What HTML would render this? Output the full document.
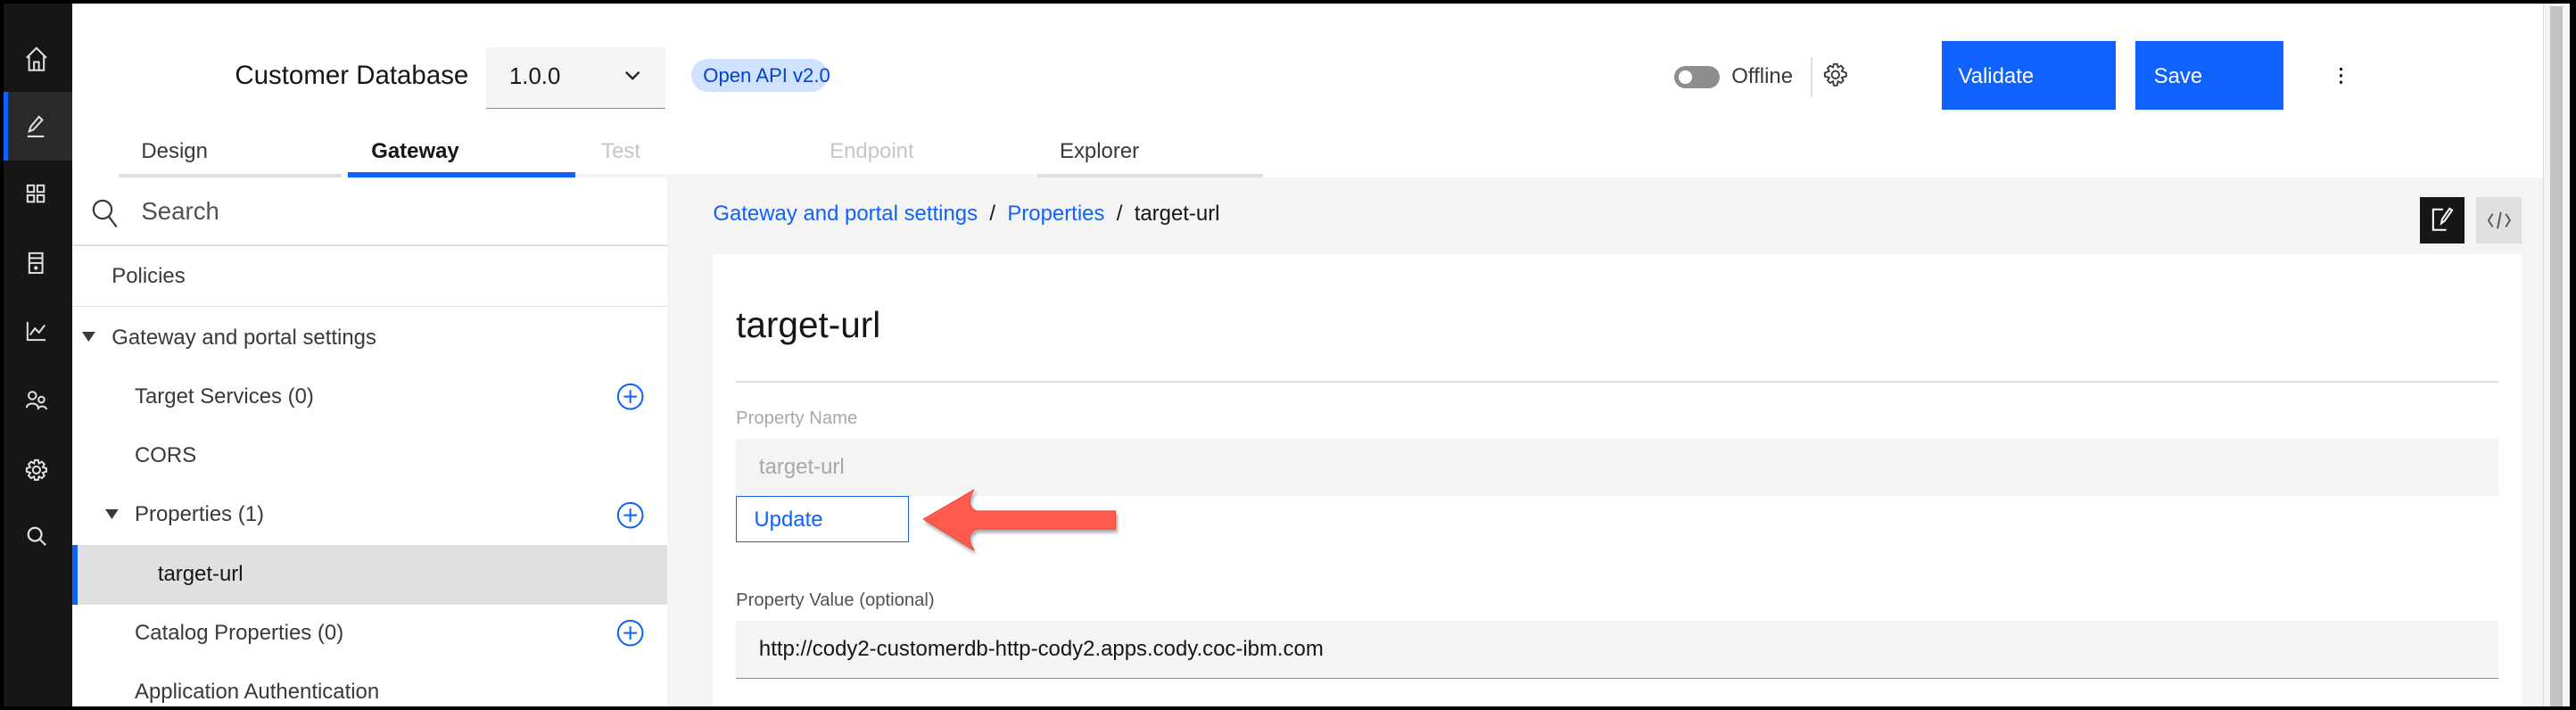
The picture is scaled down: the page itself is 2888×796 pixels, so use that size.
<!DOCTYPE html>
<html><head><meta charset="utf-8"><style>
*{box-sizing:border-box;margin:0;padding:0}
html,body{width:2888px;height:796px;overflow:hidden;background:#000}
#root{zoom:1.841837;position:relative;width:1568px;height:432px;background:#000;font-family:"Liberation Sans",sans-serif;color:#161616}
.a{position:absolute}
.t{position:absolute;white-space:nowrap;line-height:1}
svg{position:absolute;overflow:visible}
</style></head><body><div id="root">
<!-- main white area -->
<div class="a" style="left:44px;top:2px;width:1520px;height:428px;background:#fff"></div>
<!-- sidebar -->
<div class="a" style="left:2px;top:2px;width:42px;height:428px;background:#161616"></div>
<div class="a" style="left:2px;top:56px;width:42px;height:42px;background:#2a2a2a"></div>
<div class="a" style="left:2px;top:56px;width:3px;height:42px;background:#0f62fe"></div>
<svg style="left:15px;top:28px" width="14" height="16" fill="none" stroke="#e0e0e0" stroke-width="1.1"><path d="M1 7 L7 1 L13 7 M2.5 6 V14.5 H11.5 V6 M5.5 14.5 V9.5 H8.5 V14.5"/></svg>
<svg style="left:16px;top:70px" width="12" height="14" fill="none" stroke="#e0e0e0" stroke-width="1.1"><path d="M2 10 L3 7 L8 1 L10 3 L4.5 9 Z M1 13 H11"/></svg>
<svg style="left:16px;top:112px" width="12" height="12" fill="none" stroke="#e0e0e0" stroke-width="1.1"><rect x="1" y="1" width="4" height="4"/><rect x="7" y="1" width="4" height="4"/><rect x="1" y="7" width="4" height="4"/><rect x="7" y="7" width="4" height="4"/></svg>
<svg style="left:17px;top:153px" width="10" height="14" fill="none" stroke="#e0e0e0" stroke-width="1.1"><rect x="1" y="1" width="8" height="12"/><path d="M1 4 H9 M1 7 H9"/><circle cx="5" cy="10" r=".6" fill="#e0e0e0"/></svg>
<svg style="left:16px;top:195px" width="13" height="13" fill="none" stroke="#e0e0e0" stroke-width="1.1"><path d="M1 1 V12 H12 M2.5 9 L5.5 5 L8 7.5 L11.5 3"/></svg>
<svg style="left:15px;top:237px" width="14" height="13" fill="none" stroke="#e0e0e0" stroke-width="1.1"><circle cx="4.5" cy="3.5" r="2.3"/><path d="M1 11 C1 7.5 8 7.5 8 11"/><circle cx="10" cy="6" r="1.8"/><path d="M8 12 C8 9.5 13 9.5 13 12"/></svg>
<svg style="left:15px;top:279px" width="14" height="14" fill="none" stroke="#e0e0e0" stroke-width="1.1"><circle cx="7" cy="7" r="2.2"/><path d="M6 1 H8 L8.5 3 L10.3 2 L11.8 3.5 L10.8 5.3 L13 6 V8 L10.8 8.7 L11.8 10.5 L10.3 12 L8.5 11 L8 13 H6 L5.5 11 L3.7 12 L2.2 10.5 L3.2 8.7 L1 8 V6 L3.2 5.3 L2.2 3.5 L3.7 2 L5.5 3 Z"/></svg>
<svg style="left:16px;top:320px" width="13" height="13" fill="none" stroke="#e0e0e0" stroke-width="1.2"><circle cx="5.5" cy="5.5" r="4"/><path d="M8.5 8.5 L12 12"/></svg>
<!-- scrollbar -->
<div class="a" style="left:1548px;top:2px;width:16px;height:428px;background:#f4f4f4;border-left:1px solid #ddd"></div>
<div class="a" style="left:1552px;top:4px;width:8px;height:426px;background:#c1c1c1"></div>
<!-- header -->
<div class="t" style="left:143px;top:38px;font-size:16px">Customer Database</div>
<div class="a" style="left:296px;top:29px;width:109px;height:37px;background:#f4f4f4;border-bottom:1px solid #8d8d8d"></div>
<div class="t" style="left:310px;top:40px;font-size:14px">1.0.0</div>
<svg style="left:380px;top:43px" width="10" height="6" fill="none" stroke="#161616" stroke-width="1.2"><path d="M1 1 L5 5 L9 1"/></svg>
<div class="a" style="left:421px;top:36px;width:83px;height:20px;background:#d0e2ff;border-radius:10px"></div>
<div class="t" style="left:428px;top:40px;font-size:12px;color:#0043ce">Open API v2.0</div>
<div class="a" style="left:1019px;top:40px;width:28px;height:14px;background:#8d8d8d;border-radius:7px"></div>
<div class="a" style="left:1022px;top:43px;width:8px;height:8px;background:#fff;border-radius:4px"></div>
<div class="t" style="left:1054px;top:40px;font-size:13px;color:#393939">Offline</div>
<div class="a" style="left:1102px;top:35px;width:1px;height:24px;background:#e0e0e0"></div>
<svg style="left:1110px;top:38px" width="15" height="15" fill="none" stroke="#393939" stroke-width="1"><circle cx="7.5" cy="7.5" r="2.3"/><path d="M6.5 1 H8.5 L9 3 L10.8 2 L12.3 3.5 L11.3 5.3 L14 6.3 V8.5 L11.3 9.2 L12.3 11 L10.8 12.5 L9 11.5 L8.5 14 H6.5 L6 11.5 L4.2 12.5 L2.7 11 L3.7 9.2 L1 8.5 V6.3 L3.7 5.3 L2.7 3.5 L4.2 2 L6 3 Z"/></svg>
<div class="a" style="left:1182px;top:25px;width:106px;height:42px;background:#0f62fe"></div>
<div class="t" style="left:1192px;top:40px;font-size:13px;color:#fff">Validate</div>
<div class="a" style="left:1300px;top:25px;width:90px;height:42px;background:#0f62fe"></div>
<div class="t" style="left:1311px;top:40px;font-size:13px;color:#fff">Save</div>
<div class="a" style="left:1424px;top:41px;width:2px;height:2px;background:#161616;box-shadow:0 4px 0 #161616,0 8px 0 #161616"></div>
<!-- tabs -->
<div class="t" style="left:86px;top:86px;font-size:13px;color:#393939">Design</div>
<div class="t" style="left:226px;top:86px;font-size:13px;font-weight:bold">Gateway</div>
<div class="t" style="left:366px;top:86px;font-size:13px;color:#c6c6c6">Test</div>
<div class="t" style="left:505px;top:86px;font-size:13px;color:#c6c6c6">Endpoint</div>
<div class="t" style="left:645px;top:86px;font-size:13px;color:#393939">Explorer</div>
<div class="a" style="left:72px;top:106px;width:136px;height:2px;background:#e0e0e0"></div>
<div class="a" style="left:212px;top:105px;width:138px;height:3px;background:#0f62fe"></div>
<div class="a" style="left:350px;top:106px;width:280px;height:2px;background:#f4f4f4"></div>
<div class="a" style="left:631px;top:106px;width:138px;height:2px;background:#e0e0e0"></div>
<!-- left panel -->
<svg style="left:56px;top:121px" width="16" height="18" fill="none" stroke="#393939" stroke-width="1.2"><circle cx="6.5" cy="6.5" r="5.5"/><path d="M10.5 11 L15 17"/></svg>
<div class="t" style="left:86px;top:121px;font-size:15px;color:#525252">Search</div>
<div class="a" style="left:44px;top:149px;width:362px;height:1px;background:#e0e0e0"></div>
<div class="t" style="left:68px;top:162px;font-size:13px;color:#393939">Policies</div>
<div class="a" style="left:44px;top:186px;width:362px;height:1px;background:#e0e0e0"></div>
<svg style="left:50px;top:202px" width="8" height="6"><path d="M0 0 H8 L4 6 Z" fill="#393939"/></svg>
<div class="t" style="left:68px;top:199px;font-size:13px;color:#393939">Gateway and portal settings</div>
<div class="t" style="left:82px;top:235px;font-size:13px;color:#393939">Target Services (0)</div>
<div class="t" style="left:82px;top:271px;font-size:13px;color:#393939">CORS</div>
<svg style="left:64px;top:310px" width="8" height="6"><path d="M0 0 H8 L4 6 Z" fill="#393939"/></svg>
<div class="t" style="left:82px;top:307px;font-size:13px;color:#393939">Properties (1)</div>
<div class="a" style="left:44px;top:332px;width:362px;height:36px;background:#e0e0e0"></div>
<div class="a" style="left:44px;top:332px;width:3px;height:36px;background:#0f62fe"></div>
<div class="t" style="left:96px;top:343px;font-size:13px;color:#161616">target-url</div>
<div class="t" style="left:82px;top:379px;font-size:13px;color:#393939">Catalog Properties (0)</div>
<div class="t" style="left:82px;top:415px;font-size:13px;color:#393939">Application Authentication</div>
<svg style="left:375px;top:233px" width="17" height="17" fill="none" stroke="#0f62fe" stroke-width="1.1"><circle cx="8.5" cy="8.5" r="7.5"/><path d="M8.5 4.5 V12.5 M4.5 8.5 H12.5"/></svg>
<svg style="left:375px;top:305px" width="17" height="17" fill="none" stroke="#0f62fe" stroke-width="1.1"><circle cx="8.5" cy="8.5" r="7.5"/><path d="M8.5 4.5 V12.5 M4.5 8.5 H12.5"/></svg>
<svg style="left:375px;top:377px" width="17" height="17" fill="none" stroke="#0f62fe" stroke-width="1.1"><circle cx="8.5" cy="8.5" r="7.5"/><path d="M8.5 4.5 V12.5 M4.5 8.5 H12.5"/></svg>
<!-- right area -->
<div class="a" style="left:406px;top:108px;width:1142px;height:322px;background:#f4f4f4"></div>
<div class="t" style="left:434px;top:124px;font-size:13px;color:#0f62fe">Gateway and portal settings <span style="color:#161616">&nbsp;/&nbsp;</span> Properties <span style="color:#161616">&nbsp;/&nbsp; target-url</span></div>
<div class="a" style="left:1473px;top:120px;width:27px;height:28px;background:#161616"></div>
<svg style="left:1480px;top:126px" width="13" height="15" fill="none" stroke="#fff" stroke-width="1.1"><path d="M7 1.5 H1 V14 H9 M6 10 L6.5 7.5 L11 1 L12.5 2 L8 8.5 Z"/></svg>
<div class="a" style="left:1507px;top:120px;width:28px;height:28px;background:#e0e0e0"></div>
<svg style="left:1514px;top:128px" width="14" height="12" fill="none" stroke="#525252" stroke-width="1"><path d="M3 2 L0.5 6 L3 10 M11 2 L13.5 6 L11 10 M8 1 L6 11"/></svg>
<!-- card -->
<div class="a" style="left:434px;top:155px;width:1101px;height:275px;background:#fff"></div>
<div class="t" style="left:448px;top:187px;font-size:22px;color:#161616">target-url</div>
<div class="a" style="left:448px;top:232px;width:1073px;height:1px;background:#e0e0e0"></div>
<div class="t" style="left:448px;top:249px;font-size:11px;color:#a8a8a8">Property Name</div>
<div class="a" style="left:448px;top:267px;width:1073px;height:35px;background:#f4f4f4"></div>
<div class="t" style="left:462px;top:278px;font-size:13px;color:#a8a8a8">target-url</div>
<div class="a" style="left:448px;top:302px;width:105px;height:28px;background:#fff;border:1px solid #0f62fe"></div>
<div class="t" style="left:459px;top:310px;font-size:13px;color:#0f62fe">Update</div>
<svg style="left:0;top:0" width="1" height="1"><path d="M562 316 L593 298 Q587 307 594 311 L679 311 L679 322 L594 322 Q587 326 593 335 Z" fill="#ff5a4d" stroke="#e8463a" stroke-width=".5" style="filter:drop-shadow(1px 2px 1px rgba(0,0,0,.35))"/></svg>
<div class="t" style="left:448px;top:360px;font-size:11px;color:#525252">Property Value (optional)</div>
<div class="a" style="left:448px;top:378px;width:1073px;height:35px;background:#f4f4f4;border-bottom:1px solid #8d8d8d"></div>
<div class="t" style="left:462px;top:389px;font-size:13px;color:#161616">http://cody2-customerdb-http-cody2.apps.cody.coc-ibm.com</div>
</div></body></html>
